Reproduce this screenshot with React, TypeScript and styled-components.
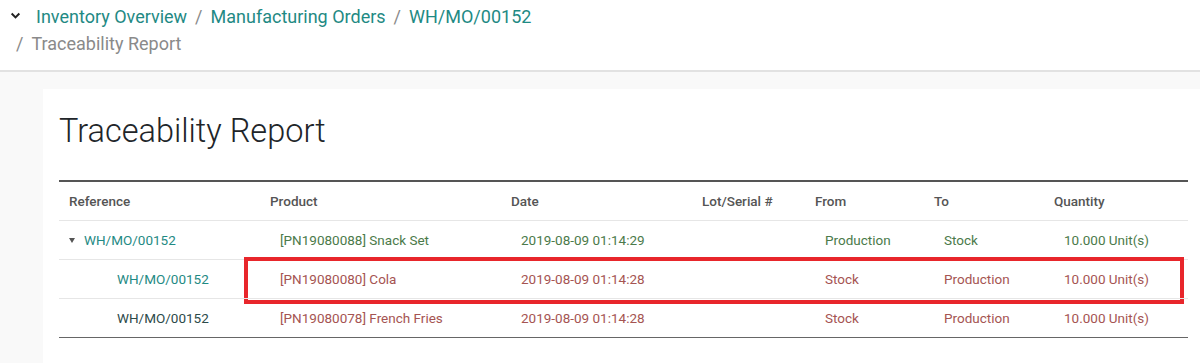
import styled, { createGlobalStyle } from "styled-components";

const GlobalStyle = createGlobalStyle`
  html, body {
    margin: 0;
    padding: 0;
    background: #f9f9f9;
    font-family: Roboto, "Liberation Sans", sans-serif;
  }
`;

const Page = styled.div`
  width: 1200px;
  height: 363px;
  overflow: hidden;
  display: flex;
  flex-direction: column;
`;

const ControlPanel = styled.header`
  background: #fff;
  height: 72px;
  border-bottom: 2px solid #e2e2e2;
  padding: 3px 16px 0 10px;
  box-sizing: border-box;
  font-size: 18px;
  line-height: 20px;
`;

const Crumbs = styled.div`
  display: flex;
  align-items: center;
  height: 27px;
`;

const Toggle = styled.svg`
  width: 11px;
  height: 11px;
  margin-right: 15px;
  margin-top: -2px;
`;

const Crumb = styled.a<{ $active?: boolean }>`
  color: ${(p) => (p.$active ? "#8a8a8a" : "#1f8a84")};
  text-decoration: none;
`;

const Sep = styled.span<{ $lead?: boolean }>`
  color: #8a8a8a;
  margin: 0 8px 0 ${(p) => (p.$lead ? 0 : 8)}px;
`;

const SecondLine = styled.div`
  display: flex;
  align-items: center;
  height: 27px;
  padding-left: 6px;
`;

const Body = styled.main`
  flex: 1;
  padding: 17px 0 0 43px;
`;

const Sheet = styled.section`
  background: #fff;
  height: 100%;
  padding: 22px 12px 0 16px;
  box-sizing: border-box;
`;

const Title = styled.h1`
  margin: 0 0 29px 0;
  font-weight: 300;
  font-size: 32.5px;
  line-height: 40px;
  color: #212529;
`;

const Table = styled.div`
  border-top: 2px solid #555;
  border-bottom: 1px solid #666;
  font-size: 13.5px;
`;

const Row = styled.div<{ $head?: boolean; $tone?: "ok" | "bad" }>`
  display: grid;
  grid-template-columns: 201px 241px 191px 113px 119px 120px 1fr;
  height: 38px;
  align-items: center;
  border-top: ${(p) => (p.$head ? "none" : "1px solid #e6e6e6")};
  color: ${(p) =>
    p.$head ? "#555" : p.$tone === "ok" ? "#4b7a4a" : "#a55452"};
  font-weight: ${(p) => (p.$head ? 500 : 400)};
  position: relative;
`;

const HeadCell = styled.div`
  padding-left: 10px;
`;

const Cell = styled.div`
  padding-left: 20px;
  white-space: nowrap;
`;

const RefCell = styled.div<{ $level: number; $plain?: boolean }>`
  padding-left: ${(p) => (p.$level === 0 ? 10 : 58)}px;
  display: flex;
  align-items: center;
  color: ${(p) => (p.$plain ? "#2c4a4a" : "#1f8a84")};
  white-space: nowrap;
`;

const Caret = styled.span`
  display: inline-block;
  width: 0;
  height: 0;
  border-left: 3.5px solid transparent;
  border-right: 3.5px solid transparent;
  border-top: 5px solid #555;
  margin-right: 9px;
`;

const Highlight = styled.div`
  position: absolute;
  left: 185px;
  right: 4px;
  top: -3px;
  bottom: -6px;
  border: 4px solid #e8262b;
  pointer-events: none;
`;

const headers = [
  "Reference",
  "Product",
  "Date",
  "Lot/Serial #",
  "From",
  "To",
  "Quantity",
];

const rows = [
  {
    ref: "WH/MO/00152",
    level: 0,
    product: "[PN19080088] Snack Set",
    date: "2019-08-09 01:14:29",
    from: "Production",
    to: "Stock",
    tone: "ok" as const,
  },
  {
    ref: "WH/MO/00152",
    level: 1,
    product: "[PN19080080] Cola",
    date: "2019-08-09 01:14:28",
    from: "Stock",
    to: "Production",
    tone: "bad" as const,
    marked: true,
  },
  {
    ref: "WH/MO/00152",
    level: 1,
    plain: true,
    product: "[PN19080078] French Fries",
    date: "2019-08-09 01:14:28",
    from: "Stock",
    to: "Production",
    tone: "bad" as const,
  },
];

export default function App() {
  return (
    <Page>
      <GlobalStyle />
      <ControlPanel>
        <Crumbs>
          <Toggle viewBox="0 0 10 10">
            <path
              d="M1.5 3.2 L5 6.7 L8.5 3.2"
              fill="none"
              stroke="#222"
              strokeWidth="1.8"
            />
          </Toggle>
          <Crumb>Inventory Overview</Crumb>
          <Sep>/</Sep>
          <Crumb>Manufacturing Orders</Crumb>
          <Sep>/</Sep>
          <Crumb>WH/MO/00152</Crumb>
        </Crumbs>
        <SecondLine>
          <Sep $lead>/</Sep>
          <Crumb $active>Traceability Report</Crumb>
        </SecondLine>
      </ControlPanel>
      <Body>
        <Sheet>
          <Title>Traceability Report</Title>
          <Table>
            <Row $head>
              {headers.map((h) => (
                <HeadCell key={h}>{h}</HeadCell>
              ))}
            </Row>
            {rows.map((r, i) => (
              <Row key={i} $tone={r.tone}>
                <RefCell $level={r.level} $plain={r.plain}>
                  {r.level === 0 && <Caret />}
                  {r.ref}
                </RefCell>
                <Cell>{r.product}</Cell>
                <Cell>{r.date}</Cell>
                <Cell></Cell>
                <Cell>{r.from}</Cell>
                <Cell>{r.to}</Cell>
                <Cell>10.000 Unit(s)</Cell>
                {r.marked && <Highlight />}
              </Row>
            ))}
          </Table>
        </Sheet>
      </Body>
    </Page>
  );
}
